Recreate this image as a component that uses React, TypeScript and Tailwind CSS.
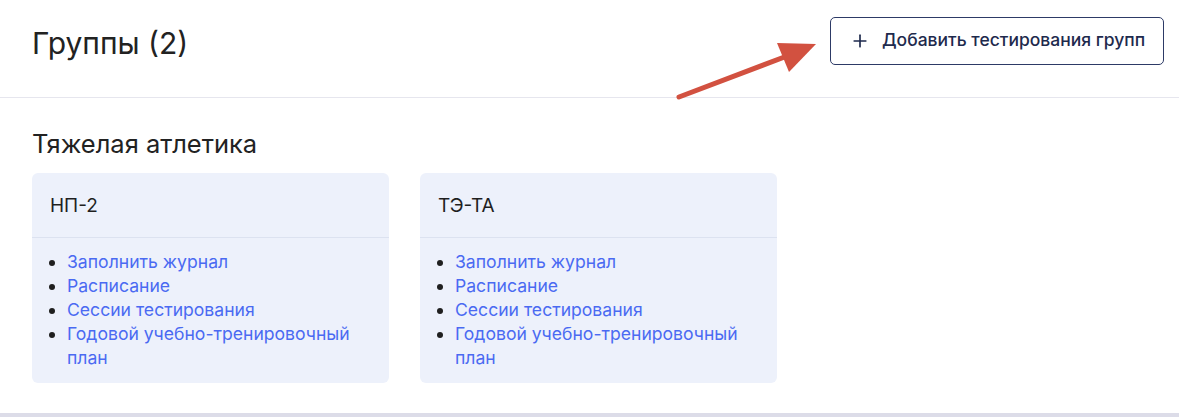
import { Plus } from "lucide-react";

const groups = ["НП-2", "ТЭ-ТА"];

const links = [
  "Заполнить журнал",
  "Расписание",
  "Сессии тестирования",
  "Годовой учебно-тренировочный план",
];

const GroupCard = ({ name }: { name: string }) => (
  <div className="w-[357px] rounded-md bg-[#edf1fb]">
    <div className="flex h-[65px] items-center border-b border-[#dce2f0] px-[18px] pt-[3px] text-[19px] text-[#1f1f1f]">
      {name}
    </div>
    <ul className="list-disc px-[18px] pb-[13px] pl-[35px] pt-[12px] text-[17.6px] leading-6 text-[#4a6af2] marker:text-[#1f1f1f]">
      {links.map((l) => (
        <li key={l}>
          <a href="#">{l}</a>
        </li>
      ))}
    </ul>
  </div>
);

export default function App() {
  return (
    <div
      className="relative h-[417px] w-full overflow-hidden bg-white"
      style={{ fontFamily: "Inter, 'Noto Sans', sans-serif" }}
    >
      {/* Header */}
      <div className="flex h-[98px] items-center justify-between border-b border-[#e6e6ee] pl-8 pr-[15px]">
        <h1 className="pb-[10px] text-[30px] text-[#222]">Группы (2)</h1>
        <button className="mb-[16px] flex h-[48px] w-[334px] items-center gap-[12px] rounded-[5px] border border-[#2d3a66] pl-[19px] text-[17.5px] font-medium text-[#1e2a4d]">
          <Plus className="h-[20px] w-[20px]" strokeWidth={2} />
          Добавить тестирования групп
        </button>
      </div>

      {/* Content */}
      <div className="px-8 pt-[30px]">
        <h2 className="text-[25.5px] leading-8 text-[#222]">Тяжелая атлетика</h2>
        <div className="mt-[13px] flex gap-[31px]">
          {groups.map((g) => (
            <GroupCard key={g} name={g} />
          ))}
        </div>
      </div>

      <div className="absolute bottom-0 left-0 right-0 h-[4px] bg-[#dcdce8]" />

      {/* Annotation arrow */}
      <svg className="pointer-events-none absolute left-0 top-0" width="1179" height="417">
        <line x1="679" y1="97" x2="795" y2="53" stroke="#d25140" strokeWidth="5" strokeLinecap="round" />
        <polygon points="816,44 777,43 789,72" fill="#d25140" />
      </svg>
    </div>
  );
}
